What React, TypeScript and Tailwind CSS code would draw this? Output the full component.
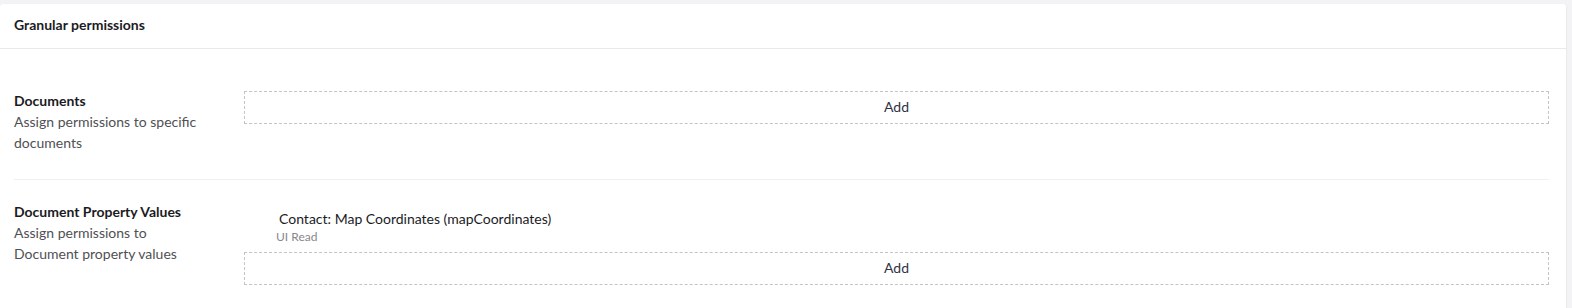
const rows = [
  {
    label: 'Documents',
    description: 'Assign permissions to specific documents',
    items: [] as { name: string; detail: string }[],
  },
  {
    label: 'Document Property Values',
    description: 'Assign permissions to Document property values',
    items: [{ name: 'Contact: Map Coordinates (mapCoordinates)', detail: 'UI Read' }],
  },
]

function AddButton() {
  return (
    <button className="w-full h-[33px] pb-[2px] border border-dashed border-[#c4c4c8] text-[14px] text-[#2f3345] bg-white">
      Add
    </button>
  )
}

export default function App() {
  return (
    <div className="h-[308px] bg-[#f3f3f5] pt-[4px] pr-[6px] overflow-hidden" style={{ fontFamily: 'Lato, "Open Sans", sans-serif' }}>
      <div className="bg-white rounded-[3px] shadow-[0_1px_2px_rgba(0,0,0,0.12)] h-[320px]">
        <div className="h-[45px] px-[14px] pb-[3px] flex items-center border-b border-[#e9e9eb]">
          <h2 className="text-[14px] font-bold text-[#1b1b1f]">Granular permissions</h2>
        </div>

        <div className="pl-[14px] pr-[17px] pt-[41px]">
          {rows.map((row, i) => (
            <div
              key={row.label}
              className={`flex ${i === 0 ? 'pb-[26px] border-b border-[#f0f0f2]' : 'pt-[21px]'}`}
            >
              <div className="w-[230px] shrink-0 pr-[30px] text-[14px] leading-[21px]">
                <div className="font-bold text-[#1b1b1f]">{row.label}</div>
                <div className="text-[#505054]">{row.description}</div>
              </div>
              <div className={`flex-1 ${row.items.length ? 'pt-[8px]' : 'pt-[1px]'}`}>
                {row.items.map((item) => (
                  <div key={item.name} className="pl-[35px] mb-[7px]">
                    <div className="text-[14px] leading-[20px] text-[#1b1b1f]">{item.name}</div>
                    <div className="text-[12px] leading-[16px] text-[#88878c] -ml-[3px]">{item.detail}</div>
                  </div>
                ))}
                <AddButton />
              </div>
            </div>
          ))}
        </div>
      </div>
    </div>
  )
}
